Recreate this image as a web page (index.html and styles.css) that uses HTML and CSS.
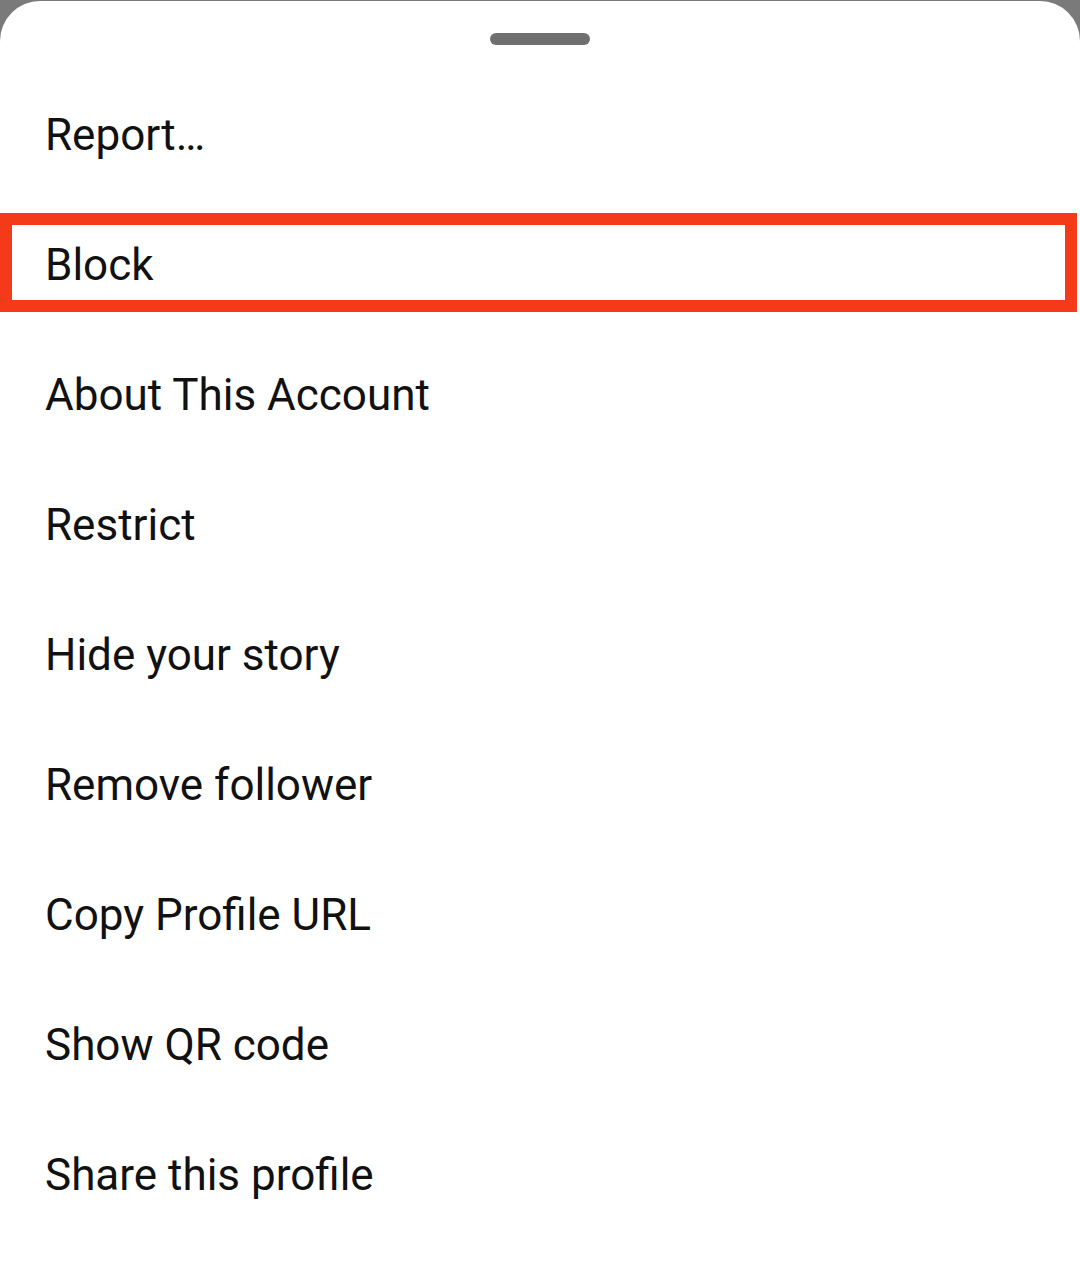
FILE: index.html
```html
<!DOCTYPE html>
<html>
<head>
	<meta charset="UTF-8">
	<link rel="stylesheet" href="styles.css">
</head>
<body>
	<div class="sheet">
		<div class="handle"></div>

		<ul class="menu">
			<li>Report…</li>
			<li class="marked">Block</li>
			<li>About This Account</li>
			<li>Restrict</li>
			<li>Hide your story</li>
			<li>Remove follower</li>
			<li>Copy Profile URL</li>
			<li>Show QR code</li>
			<li>Share this profile</li>
		</ul>
	</div>
</body>
</html>
```

FILE: styles.css
```css
html, body {
	margin: 0;
	height: 100%;
}

body {
	background: #7a7a7a;
	padding-top: 1px;
	box-sizing: border-box;
	font-family: Roboto, "Noto Sans", sans-serif;
}

.sheet {
	position: relative;
	background: #ffffff;
	border-radius: 40px 40px 0 0;
	height: 100%;
	padding-top: 32px;
	box-sizing: border-box;
}

.handle {
	width: 100px;
	height: 12px;
	margin: 0 auto;
	background: #6f6f6f;
	border-radius: 6px;
}

.menu {
	list-style: none;
	margin: 25px 0 0 0;
	padding: 0;
}

.menu li {
	position: relative;
	height: 130px;
	line-height: 130px;
	padding-left: 45px;
	font-size: 44px;
	color: #111111;
}

/* annotation box drawn over the row */
.menu li.marked::after {
	content: "";
	position: absolute;
	left: 0;
	top: 13px;
	width: 1077px;
	height: 99px;
	box-sizing: border-box;
	border: 12px solid #f43a18;
}
```
